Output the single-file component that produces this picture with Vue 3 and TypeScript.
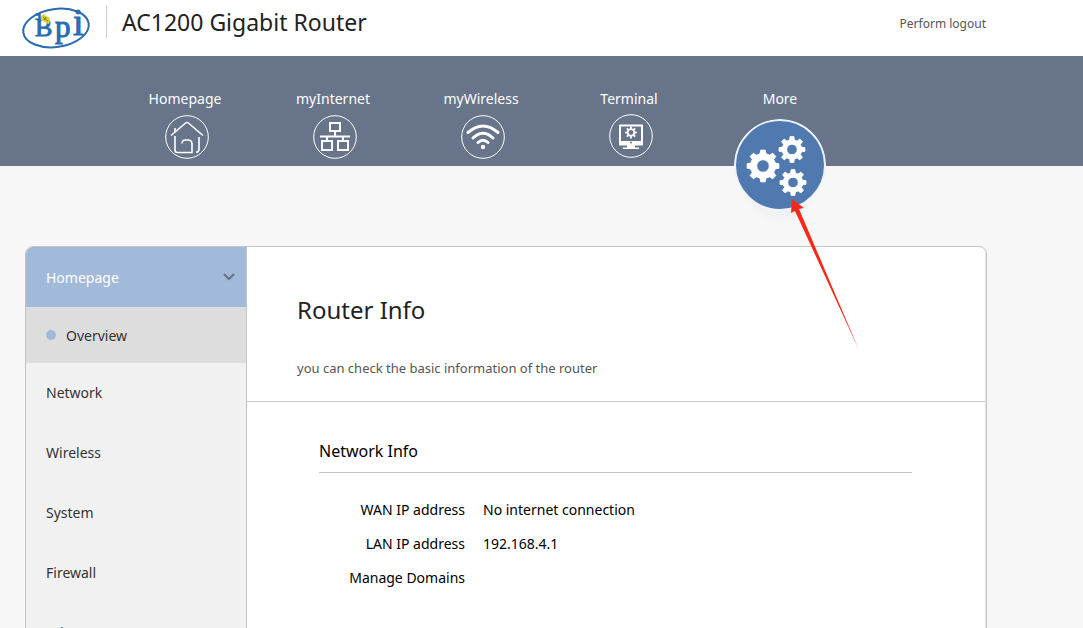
<script setup lang="ts">
interface NavItem {
  label: string
  icon: 'home' | 'lan' | 'wifi' | 'terminal' | 'gears'
}

const navItems: NavItem[] = [
  { label: 'Homepage', icon: 'home' },
  { label: 'myInternet', icon: 'lan' },
  { label: 'myWireless', icon: 'wifi' },
  { label: 'Terminal', icon: 'terminal' },
  { label: 'More', icon: 'gears' },
]

const sideItems: string[] = ['Network', 'Wireless', 'System', 'Firewall', 'Advance']

const rows: { label: string; value: string }[] = [
  { label: 'WAN IP address', value: 'No internet connection' },
  { label: 'LAN IP address', value: '192.168.4.1' },
  { label: 'Manage Domains', value: '' },
]

// Eight-toothed cog with a round hole; drawn with the even-odd fill rule.
function gear(cx: number, cy: number, outer: number, inner: number, hole: number): string {
  const step = Math.PI / 4
  const at = (r: number, a: number) =>
    `${(cx + r * Math.cos(a)).toFixed(2)} ${(cy + r * Math.sin(a)).toFixed(2)}`
  let d = ''
  for (let i = 0; i < 8; i++) {
    const a = i * step
    d += `${i === 0 ? 'M' : 'L'}${at(inner, a - step * 0.3)}`
    d += `L${at(outer, a - step * 0.18)}L${at(outer, a + step * 0.18)}L${at(inner, a + step * 0.3)}`
    d += `A${inner} ${inner} 0 0 1 ${at(inner, a + step * 0.7)}`
  }
  return `${d}ZM${cx - hole} ${cy}a${hole} ${hole} 0 1 0 ${hole * 2} 0a${hole} ${hole} 0 1 0 ${-hole * 2} 0Z`
}

const bigGear = gear(29, 47, 16, 12.5, 6.3)
const topGear = gear(58, 30.5, 13, 9.7, 5.3)
const lowGear = gear(59, 63.5, 13, 9.7, 5.3)
const tinyGear = gear(22, 18.5, 6, 4.2, 2.4)
</script>

<template>
  <div class="page">
    <header class="top">
      <a class="brand" href="#" aria-label="Bpi">
        <svg class="logo" width="72" height="44" viewBox="20 6 72 44">
          <ellipse cx="56" cy="28" rx="33" ry="19" transform="rotate(-8 56 28)" fill="none" stroke="#2a6cb0" stroke-width="2" />
          <g class="letters" fill="#2a6cb0" stroke="#2a6cb0" stroke-width="1">
            <text x="35" y="36" font-size="26">B</text>
            <text x="55" y="37" font-size="31">p</text>
            <text x="73" y="35" font-size="38">i</text>
          </g>
          <path d="M36 14.500h3.500V22" fill="none" stroke="#2a6cb0" stroke-width="2.500" />
          <path d="M41 16l3-2 2 2 3 1 1 3-1 4-3-1-3-2-2-1z" fill="#d8d43a" />
          <path d="M43 17l5 4M46 17l-2 3" stroke="#6b7426" stroke-width="1" />
        </svg>
      </a>
      <h1 class="title">AC1200 Gigabit Router</h1>
      <a class="logout" href="#">Perform logout</a>
    </header>

    <nav class="nav">
      <a v-for="item in navItems" :key="item.label" class="nav-item" :class="{ more: item.icon === 'gears' }" href="#">
        <span class="nav-label">{{ item.label }}</span>
        <svg v-if="item.icon === 'home'" class="nav-icon" viewBox="0 0 44 44">
          <circle cx="22" cy="22" r="21.3" />
          <g stroke-width="1.6">
            <path d="M6 20.500 20 8.500q2-2 4 0l14 12M10 16.500V13" />
            <path d="M10 21v14q0 2.500 2.500 2.500H27V29q0-4-4-4h-2.500q-3.500 0-3.500 3.500M31 37.500q3-.5 3-3.500V22" />
          </g>
        </svg>
        <svg v-else-if="item.icon === 'lan'" class="nav-icon" viewBox="0 0 44 44">
          <circle cx="22" cy="22" r="21.3" />
          <g stroke-width="2">
            <path d="M17 8h10v8H17zM9 26h10v9H9zM25 26h10v9H25z" />
            <path d="M22 16v5M7 21.500h30M14 21v5M30 21v5" />
          </g>
        </svg>
        <svg v-else-if="item.icon === 'wifi'" class="nav-icon" viewBox="0 0 44 44">
          <circle cx="22" cy="22" r="21.3" />
          <path d="M7 17.500q15-13 30 0M12 23q10-9.500 20 0M17 27.500q5-4.500 10 0" stroke-width="3" stroke-linecap="round" />
          <circle cx="22" cy="32" r="2.200" fill="#fff" stroke="none" />
        </svg>
        <svg v-else-if="item.icon === 'terminal'" class="nav-icon raised" viewBox="0 0 44 44">
          <circle cx="22" cy="22" r="21.3" />
          <path d="M11 11.500h22v19H11z" stroke-width="2" stroke-linejoin="round" />
          <path d="M10 27h24v4H10zM18 31h8v3h-8zM14 33.500h16V35H14z" fill="#fff" stroke="none" />
          <circle cx="22" cy="28.500" r="1" fill="#677489" stroke="none" />
          <path :d="tinyGear" fill="#fff" fill-rule="evenodd" stroke="none" />
        </svg>
        <svg v-else class="more-icon" viewBox="0 0 92 92">
          <circle cx="46" cy="46" r="45" fill="#5079b0" stroke="#eef4fb" stroke-width="2" />
          <g fill="#fff" fill-rule="evenodd" stroke="#fff" stroke-width="1" stroke-linejoin="round">
            <path :d="bigGear" />
            <path :d="topGear" />
            <path :d="lowGear" />
          </g>
        </svg>
      </a>
      <svg class="pointer" width="70" height="152" viewBox="0 0 70 152" aria-hidden="true">
        <path d="M1 0 13 9 8 10 68 151 4 12 0 14z" fill="#f5291a" />
      </svg>
    </nav>

    <div class="panel">
      <aside class="side">
        <button class="side-head" type="button">
          <span>Homepage</span>
          <svg width="12" height="8" viewBox="0 0 12 8">
            <path d="M1 1l5 5 5-5" fill="none" stroke="#69737f" stroke-width="2" />
          </svg>
        </button>
        <a class="side-sub" href="#">Overview</a>
        <a v-for="s in sideItems" :key="s" class="side-link" href="#">{{ s }}</a>
      </aside>
      <main class="main">
        <div class="intro">
          <h2>Router Info</h2>
          <p>you can check the basic information of the router</p>
        </div>
        <section class="info">
          <h3>Network Info</h3>
          <dl>
            <div v-for="r in rows" :key="r.label" class="row">
              <dt>{{ r.label }}</dt>
              <dd>{{ r.value }}</dd>
            </div>
          </dl>
        </section>
      </main>
    </div>
  </div>
</template>

<style>
body {
  margin: 0;
  background: #f7f7f7;
}
</style>

<style scoped>
.page {
  height: 100vh;
  overflow: hidden;
  background: #f7f7f7;
  font-family: "Noto Sans", "Open Sans", sans-serif;
  font-size: 14px;
  color: #333;
}
.page a {
  color: inherit;
  text-decoration: none;
}
h1, h2, h3, p, dl, dd {
  margin: 0;
  font-weight: 400;
}
.top {
  display: flex;
  align-items: flex-start;
  box-sizing: border-box;
  height: 56px;
  padding: 6px 97px 0 20px;
  background: #fff;
}
.brand,
.logo {
  display: block;
  overflow: visible;
}
.letters {
  font-family: "Liberation Serif", serif;
}
.title {
  margin-left: 14px;
  padding-left: 15px;
  border-left: 1px solid #ccc;
  font-size: 23px;
  line-height: 32px;
  color: #222;
}
.page .logout {
  margin-left: auto;
  font-size: 12px;
  line-height: 36px;
  color: #555;
}
.nav {
  position: relative;
  display: flex;
  box-sizing: border-box;
  height: 110px;
  padding: 32px 0 0 113px;
  background: #677489;
}
.page .nav-item {
  display: flex;
  flex-direction: column;
  align-items: center;
  width: 148px;
  color: #fff;
}
.page .more {
  width: 150px;
}
.nav-label {
  line-height: 22px;
  margin-right: 4px;
}
.more .nav-label {
  margin-right: 0;
}
.nav-icon {
  flex: none;
  width: 44px;
  height: 44px;
  margin-top: 5px;
  fill: none;
  stroke: #fff;
}
.raised {
  margin-top: 4px;
}
.more-icon {
  flex: none;
  width: 92px;
  height: 92px;
  margin-top: 9px;
  border-radius: 50%;
  box-shadow: 0 20px 8px -12px rgba(0, 0, 0, 0.03);
}
.pointer {
  position: absolute;
  left: 791px;
  top: 143px;
  overflow: visible;
}
.panel {
  display: flex;
  margin: 80px 96px 0 25px;
  border: 1px solid #c4c4c4;
  border-radius: 8px;
  overflow: hidden;
  background: #fff;
}
.side {
  display: flex;
  flex-direction: column;
  flex: none;
  width: 220px;
  background: #f1f1f1;
  border-right: 1px solid #c4c4c4;
}
.side-head {
  display: flex;
  align-items: center;
  justify-content: space-between;
  height: 60px;
  padding: 0 11px 0 20px;
  border: 0;
  background: #a1bad9;
  color: #fff;
  font: inherit;
}
.side-sub {
  display: flex;
  align-items: center;
  gap: 10px;
  height: 56px;
  padding-left: 20px;
  background: #ddd;
}
.side-sub::before {
  content: "";
  width: 10px;
  height: 10px;
  border-radius: 50%;
  background: #a1bad9;
}
.side-link {
  padding-left: 20px;
  line-height: 60px;
}
.main {
  flex: 1;
  border-right: 1px solid #e4e4e4;
}
.intro {
  padding: 43px 50px 22px;
  border-bottom: 1px solid #c8c8c8;
}
.intro h2 {
  font-size: 24px;
  line-height: 40px;
  color: #222;
}
.intro p {
  margin-top: 27px;
  font-size: 13px;
  line-height: 22px;
  color: #555;
}
.info {
  padding: 36px 73px 80px 72px;
  color: #000;
}
.info h3 {
  padding-bottom: 8px;
  border-bottom: 1px solid #c8c8c8;
  font-size: 16px;
  line-height: 26px;
}
.info dl {
  padding-top: 20px;
}
.row {
  display: flex;
  gap: 18px;
  line-height: 34px;
}
.row dt {
  width: 146px;
  text-align: right;
}
</style>
